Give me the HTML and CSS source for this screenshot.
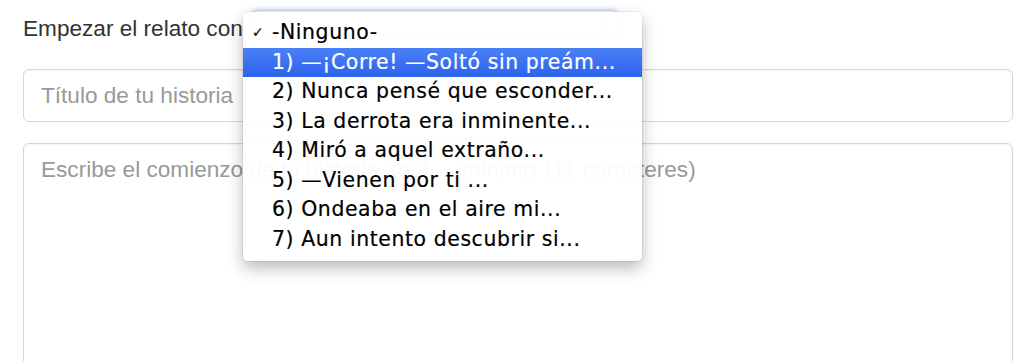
FILE: index.html
```html
<!DOCTYPE html>
<html lang="es">
<head>
    <meta charset="UTF-8">
    <meta name="viewport" content="width=device-width, initial-scale=1.0">
    <title>Nueva historia</title>
    <link rel="stylesheet" href="styles.css">
</head>
<body>
    <form class="historia">
        <div class="inicio">
            <label for="relato">Empezar el relato con</label>
            <div class="select">
                <span class="flechas">&#8661;</span>
            </div>

            <!-- menu desplegado del select -->
            <ul class="menu">
                <li class="opcion"><span class="check">&#10003;</span>-Ninguno-</li>
                <li class="opcion activa">1) —¡Corre! —Soltó sin preám...</li>
                <li class="opcion">2) Nunca pensé que esconder...</li>
                <li class="opcion">3) La derrota era inminente...</li>
                <li class="opcion">4) Miró a aquel extraño...</li>
                <li class="opcion">5) —Vienen por ti ...</li>
                <li class="opcion">6) Ondeaba en el aire mi...</li>
                <li class="opcion">7) Aun intento descubrir si...</li>
            </ul>
        </div>

        <input type="text" class="campo" placeholder="Título de tu historia">
        <textarea class="campo texto" placeholder="Escribe el comienzo de tu historia aquí... (mínimo 111 caracteres)"></textarea>
    </form>
</body>
</html>
```

FILE: styles.css
```css
body{
    margin: 0;
    padding: 0 8px 0 23px;
    background: #fff;
    color: #333;
    font: 22.6px "Liberation Sans", Arial, Helvetica, sans-serif;
}
.historia{
    display: flex;
    flex-direction: column;
}
.inicio{
    position: relative;
    display: flex;
    align-items: center;
    height: 30px;
    margin-top: 14px;
}
label{
    line-height: 30px;
}
.select{
    align-self: flex-start;
    margin: -4px 0 0 10px;
    width: 362px;
    height: 28px;
    border: 1px solid #c9d3e3;
    border-radius: 4px;
    box-shadow: 0 0 4px rgba(90, 140, 220, 0.5);
    display: flex;
    justify-content: flex-end;
    align-items: center;
}
.flechas{
    font-size: 14px;
    color: #ccc;
    margin-right: 8px;
}
.menu{
    position: absolute;
    left: 220px;
    top: -2px;
    width: 399px;
    margin: 0;
    padding: 6px 0 7px;
    list-style: none;
    background: rgba(255, 255, 255, 0.95);
    border-radius: 5px;
    box-shadow: 0 0 0 1px rgba(0, 0, 0, 0.05), 0 7px 16px rgba(0, 0, 0, 0.28);
    font: 20.4px "DejaVu Sans", "Lucida Grande", sans-serif;
    letter-spacing: 0.6px;
    -webkit-text-stroke: 0.2px;
    color: #000;
    z-index: 2;
}
.opcion{
    position: relative;
    height: 29.5px;
    line-height: 29.5px;
    padding-left: 29px;
    white-space: nowrap;
}
.opcion.activa{
    background: linear-gradient(#4a80f6, #2c63ec);
    color: #fff;
}
.check{
    position: absolute;
    left: 9px;
    font-size: 14px;
}
.campo{
    margin-top: 25px;
    height: 53px;
    box-sizing: border-box;
    border: 1px solid #d6d6d6;
    border-radius: 6px;
    padding: 0 17px;
    font: 22.6px "Liberation Sans", Arial, Helvetica, sans-serif;
    color: #555;
    box-shadow: inset 0 1px 1px rgba(0, 0, 0, 0.04);
    outline: none;
}
.campo::placeholder{
    color: #999;
}
.texto{
    margin-top: 21px;
    height: 260px;
    padding: 10px 17px;
    line-height: 31px;
    resize: none;
}
```
